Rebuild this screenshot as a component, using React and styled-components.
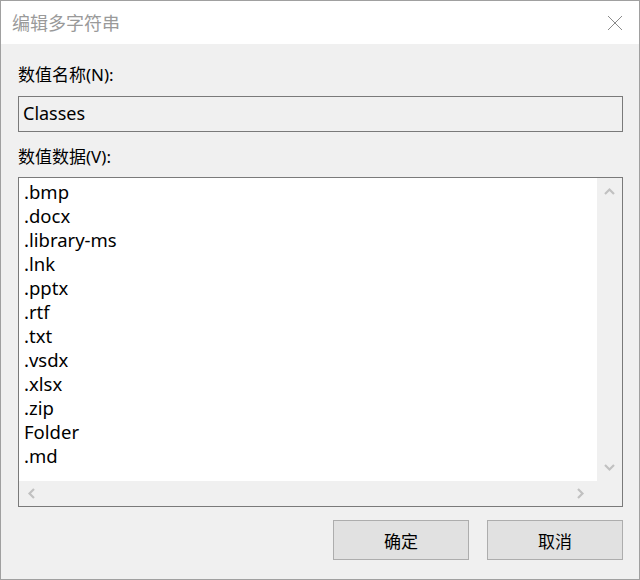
import React from "react";
import styled, { createGlobalStyle } from "styled-components";

const Global = createGlobalStyle`
  html, body { margin: 0; padding: 0; background: #f0f0f0; }
  body { font-family: "Noto Sans", "Noto Sans CJK SC", sans-serif; }
`;

const Window = styled.div`
  width: 640px;
  height: 580px;
  box-sizing: border-box;
  border: 1px solid #a0a0a0;
  background: #f0f0f0;
  display: flex;
  flex-direction: column;
`;

const TitleBar = styled.div`
  height: 43px;
  background: #ffffff;
  display: flex;
  align-items: center;
  justify-content: space-between;
  padding: 0 16px 0 11px;
  flex-shrink: 0;
`;

const Title = styled.div`
  font-family: "Noto Sans CJK SC", sans-serif;
  font-size: 18px;
  color: #9a9a9a;
  line-height: 24px;
  margin-top: -1px;
`;

const CloseBtn = styled.div`
  width: 16px;
  height: 16px;
  display: flex;
  svg { display: block; }
`;

const Body = styled.div`
  flex: 1;
  display: flex;
  flex-direction: column;
  padding: 19px 16px 0 17px;
`;

const Label = styled.div`
  font-family: "Noto Sans", "Noto Sans CJK SC", sans-serif;
  font-size: 17px;
  line-height: 24px;
  color: #000;
  margin-top: ${(p) => p.$mt}px;
  margin-bottom: ${(p) => p.$mb}px;
`;

const NameBox = styled.div`
  height: 36px;
  box-sizing: border-box;
  border: 1px solid #7a7a7a;
  background: #f0f0f0;
  padding: 0 4px;
  font-size: 18px;
  line-height: 32px;
  color: #000;
`;

const ListBox = styled.div`
  height: 330px;
  box-sizing: border-box;
  border: 1px solid #7a7a7a;
  background: #fff;
  display: grid;
  grid-template-columns: 1fr 25px;
  grid-template-rows: 1fr 25px;
`;

const ListContent = styled.div`
  padding: 2px 5px;
  overflow: hidden;
`;

const Item = styled.div`
  font-size: 18.5px;
  line-height: 24px;
  color: #000;
  white-space: nowrap;
`;

const VScroll = styled.div`
  background: #f0f0f0;
  display: flex;
  flex-direction: column;
  justify-content: space-between;
  align-items: center;
  padding: 9px 0 8px;
`;

const HScroll = styled.div`
  background: #f0f0f0;
  display: flex;
  justify-content: space-between;
  align-items: center;
  padding: 0 11px 0 8px;
`;

const Corner = styled.div`
  background: #f0f0f0;
`;

const ButtonRow = styled.div`
  display: flex;
  justify-content: flex-end;
  gap: 18px;
  margin-top: 13px;
`;

const Button = styled.div`
  width: 136px;
  height: 40px;
  box-sizing: border-box;
  border: 1px solid #adadad;
  background: #e1e1e1;
  display: flex;
  align-items: center;
  justify-content: center;
  font-family: "Noto Sans CJK SC", sans-serif;
  font-size: 17px;
  color: #000;
`;

const Chevron = ({ dir }) => {
  const paths = {
    up: "M1 7 L5.5 2.5 L10 7",
    down: "M1 3 L5.5 7.5 L10 3",
    left: "M7 1 L2.5 5.5 L7 10",
    right: "M3 1 L7.5 5.5 L3 10",
  };
  return (
    <svg width="11" height="11" viewBox="0 0 11 11">
      <path d={paths[dir]} fill="none" stroke="#c1c1c1" strokeWidth="2.2" />
    </svg>
  );
};

const items = [
  ".bmp",
  ".docx",
  ".library-ms",
  ".lnk",
  ".pptx",
  ".rtf",
  ".txt",
  ".vsdx",
  ".xlsx",
  ".zip",
  "Folder",
  ".md",
];

export default function App() {
  return (
    <>
      <Global />
      <Window>
        <TitleBar>
          <Title>编辑多字符串</Title>
          <CloseBtn>
            <svg width="16" height="16" viewBox="0 0 16 16">
              <path d="M1 1 L15 15 M15 1 L1 15" stroke="#8a8a8a" strokeWidth="1" fill="none" />
            </svg>
          </CloseBtn>
        </TitleBar>
        <Body>
          <Label $mt={0} $mb={9}>数值名称(N):</Label>
          <NameBox>Classes</NameBox>
          <Label $mt={13} $mb={8}>数值数据(V):</Label>
          <ListBox>
            <ListContent>
              {items.map((t) => (
                <Item key={t}>{t}</Item>
              ))}
            </ListContent>
            <VScroll>
              <Chevron dir="up" />
              <Chevron dir="down" />
            </VScroll>
            <HScroll>
              <Chevron dir="left" />
              <Chevron dir="right" />
            </HScroll>
            <Corner />
          </ListBox>
          <ButtonRow>
            <Button>确定</Button>
            <Button>取消</Button>
          </ButtonRow>
        </Body>
      </Window>
    </>
  );
}
